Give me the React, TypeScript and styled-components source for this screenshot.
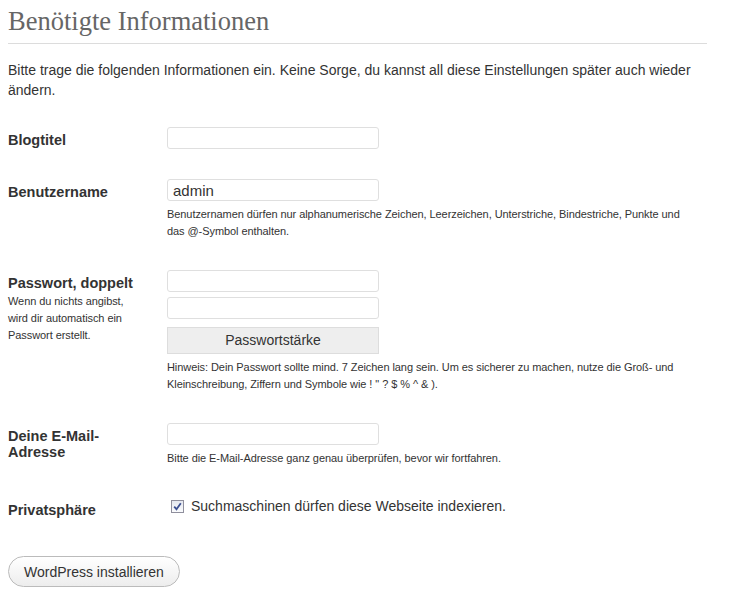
import styled, { createGlobalStyle } from 'styled-components';

const GlobalStyle = createGlobalStyle`
  body {
    margin: 0;
    background: #fff;
    font-family: 'Liberation Sans', Arial, sans-serif;
    color: #333;
  }
`;

const Page = styled.div`
  width: 699px;
  padding: 0 8px;
`;

const Title = styled.h1`
  margin: 0;
  padding: 6px 0 7px;
  line-height: 30px;
  font-family: 'Liberation Serif', Georgia, serif;
  font-weight: normal;
  font-size: 26.5px;
  color: #666;
  border-bottom: 1px solid #dcdcdc;
`;

const Intro = styled.p`
  margin: 16px 0 0;
  font-size: 14px;
  line-height: 20px;
`;

const Form = styled.div`
  margin-top: 12px;
`;

const Row = styled.div`
  display: grid;
  grid-template-columns: 159px 1fr;
  padding: 15px 0;
`;

const Label = styled.div`
  padding-top: 4px;
`;

const LabelTitle = styled.div`
  font-size: 14.5px;
  font-weight: bold;
  line-height: 16px;
  padding-top: 1px;
`;

const Small = styled.div`
  font-size: 11px;
  line-height: 17px;
  letter-spacing: -0.07px;
`;

const LabelNote = styled(Small)`
  margin-top: 2px;
`;

const Field = styled.div`
  display: flex;
  flex-direction: column;
  align-items: flex-start;
`;

const Input = styled.input<{ $gap?: boolean }>`
  box-sizing: border-box;
  width: 212px;
  height: 22px;
  margin: 0 0 ${(p) => (p.$gap ? '5px' : '0')};
  padding: 2px 5px;
  border: 1px solid #dfdfdf;
  border-radius: 3px;
  font-family: 'Liberation Sans', Arial, sans-serif;
  font-size: 15px;
  color: #333;
  outline: none;
`;

const Strength = styled.div`
  box-sizing: border-box;
  width: 212px;
  height: 27px;
  margin-top: 3px;
  background: #eee;
  border: 1px solid #ddd;
  font-size: 14px;
  line-height: 25px;
  text-align: center;
`;

const Hint = styled(Small)`
  margin-top: 5px;
`;

const CheckRow = styled.label`
  display: flex;
  align-items: center;
  gap: 7px;
  padding-left: 4px;
  font-size: 14px;
  line-height: 18px;
`;

const CheckBox = styled.span`
  box-sizing: border-box;
  width: 13px;
  height: 13px;
  border: 1px solid #8f8f9d;
  background: linear-gradient(#e4e7ef, #fafbfd);
  display: flex;
  align-items: center;
  justify-content: center;
`;

const Submit = styled.button`
  margin-top: 23px;
  box-sizing: border-box;
  height: 31px;
  padding: 0 15px;
  border: 1px solid #bbb;
  border-radius: 16px;
  background: linear-gradient(#fff, #ededed);
  font-family: 'Liberation Sans', Arial, sans-serif;
  font-size: 14px;
  color: #333;
`;

export default function App() {
  return (
    <Page>
      <GlobalStyle />
      <Title>Benötigte Informationen</Title>
      <Intro>
        Bitte trage die folgenden Informationen ein. Keine Sorge, du kannst all diese Einstellungen später auch wieder
        ändern.
      </Intro>
      <Form>
        <Row>
          <Label>
            <LabelTitle>Blogtitel</LabelTitle>
          </Label>
          <Field>
            <Input type="text" />
          </Field>
        </Row>
        <Row>
          <Label>
            <LabelTitle>Benutzername</LabelTitle>
          </Label>
          <Field>
            <Input type="text" defaultValue="admin" />
            <Hint>
              Benutzernamen dürfen nur alphanumerische Zeichen, Leerzeichen, Unterstriche, Bindestriche, Punkte und
              <br />
              das @-Symbol enthalten.
            </Hint>
          </Field>
        </Row>
        <Row>
          <Label>
            <LabelTitle>Passwort, doppelt</LabelTitle>
            <LabelNote>
              Wenn du nichts angibst,
              <br />
              wird dir automatisch ein
              <br />
              Passwort erstellt.
            </LabelNote>
          </Label>
          <Field>
            <Input type="password" $gap />
            <Input type="password" $gap />
            <Strength>Passwortstärke</Strength>
            <Hint>
              Hinweis: Dein Passwort sollte mind. 7 Zeichen lang sein. Um es sicherer zu machen, nutze die Groß- und
              <br />
              Kleinschreibung, Ziffern und Symbole wie ! " ? $ % ^ &amp; ).
            </Hint>
          </Field>
        </Row>
        <Row>
          <Label>
            <LabelTitle>
              Deine E-Mail-
              <br />
              Adresse
            </LabelTitle>
          </Label>
          <Field>
            <Input type="text" />
            <Hint>Bitte die E-Mail-Adresse ganz genau überprüfen, bevor wir fortfahren.</Hint>
          </Field>
        </Row>
        <Row>
          <Label>
            <LabelTitle>Privatsphäre</LabelTitle>
          </Label>
          <Field>
            <CheckRow>
              <CheckBox>
                <svg width="9" height="9" viewBox="0 0 9 9">
                  <path d="M1.2 4.6 L3.5 7.2 L7.8 1.2" fill="none" stroke="#3b4f91" strokeWidth="1.8" />
                </svg>
              </CheckBox>
              Suchmaschinen dürfen diese Webseite indexieren.
            </CheckRow>
          </Field>
        </Row>
      </Form>
      <Submit type="button">WordPress installieren</Submit>
    </Page>
  );
}
